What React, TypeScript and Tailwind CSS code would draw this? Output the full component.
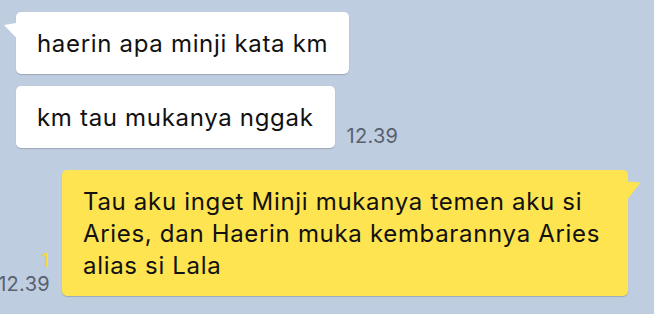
import React from "react";

function WhiteBubble({ children, tail }: { children: React.ReactNode; tail?: boolean }) {
  return (
    <div className="relative shrink-0 bg-white rounded-[5px] pl-[21px] pr-[21px] pt-4 pb-[14px] leading-8 text-[24px] tracking-[0.68px] text-[#111111] shadow-[0_1px_1px_rgba(0,0,0,0.18)]">
      {tail && (
        <svg className="absolute left-[-12px] top-[10px]" width="12" height="16" viewBox="0 0 12 16">
          <polygon points="12,1 0,3 12,15.5" fill="#ffffff" />
        </svg>
      )}
      <span className="whitespace-nowrap">{children}</span>
    </div>
  );
}

export default function App() {
  return (
    <div
      className="w-[654px] h-[314px] overflow-hidden bg-[#bfcde0] pt-3"
      style={{ fontFamily: "Inter, 'Liberation Sans', sans-serif" }}
    >
      <div className="flex pl-4">
        <WhiteBubble tail>haerin apa minji kata km</WhiteBubble>
      </div>
      <div className="flex items-end gap-3 pl-4 mt-3">
        <WhiteBubble>km tau mukanya nggak</WhiteBubble>
        <span className="text-[20px] leading-6 text-[#59616e] tracking-[0.3px]">12.39</span>
      </div>
      <div className="flex justify-end items-end gap-3 pr-[26px] mt-[22px]">
        <div className="flex flex-col items-end shrink-0">
          <span className="text-[19px] leading-6 text-[#f2d93a] mb-[-1px] pr-[1px]">1</span>
          <span className="text-[20px] leading-6 text-[#59616e] tracking-[0.3px]">12.39</span>
        </div>
        <div className="relative shrink-0 w-[566px] bg-[#fde450] rounded-[5px] pl-[21px] pr-[21px] pt-4 pb-[14px] leading-8 text-[24px] tracking-[0.68px] text-[#111111] shadow-[0_1px_1px_rgba(0,0,0,0.18)]">
          <svg className="absolute left-[calc(100%-1px)] top-[10px]" width="14" height="22" viewBox="0 0 14 22">
            <polygon points="0,1.5 13.5,2.5 0,20" fill="#fde450" />
          </svg>
          Tau aku inget Minji mukanya temen aku si Aries, dan Haerin muka kembarannya Aries alias si Lala
        </div>
      </div>
    </div>
  );
}
